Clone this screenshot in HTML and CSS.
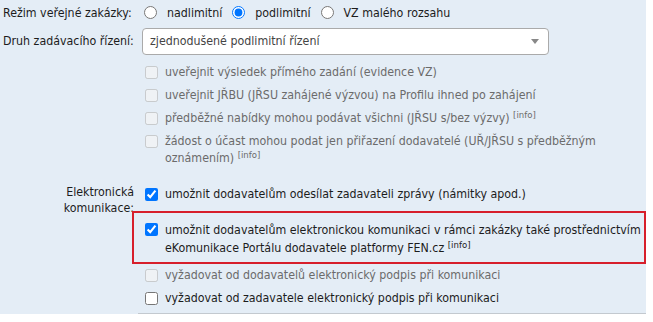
FILE: index.html
```html
<!DOCTYPE html>
<html lang="cs">
<head>
<meta charset="utf-8">
<link rel="stylesheet" href="styles.css">
</head>
<body>
<div class="form">
  <div class="row row-radio">
    <div class="label">Režim veřejné zakázky:</div>
    <div class="field radios">
      <label class="radio"><input type="radio" name="rezim"> nadlimitní</label>
      <label class="radio"><input type="radio" name="rezim" checked> podlimitní</label>
      <label class="radio"><input type="radio" name="rezim"> VZ malého rozsahu</label>
    </div>
  </div>
  <div class="row row-select">
    <div class="label">Druh zadávacího řízení:</div>
    <div class="field">
      <div class="select"><span>zjednodušené podlimitní řízení</span><span class="arrow"></span></div>
    </div>
  </div>
  <div class="row">
    <div class="label"></div>
    <div class="field checks">
      <label class="check disabled"><input type="checkbox" disabled><span>uveřejnit výsledek přímého zadání (evidence VZ)</span></label>
      <label class="check disabled"><input type="checkbox" disabled><span>uveřejnit JŘBU (JŘSU zahájené výzvou) na Profilu ihned po zahájení</span></label>
      <label class="check disabled"><input type="checkbox" disabled><span>předběžné nabídky mohou podávat všichni (JŘSU s/bez výzvy) <sup>[info]</sup></span></label>
      <label class="check disabled"><input type="checkbox" disabled><span>žádost o účast mohou podat jen přiřazení dodavatelé (UŘ/JŘSU s předběžným oznámením) <sup>[info]</sup></span></label>
    </div>
  </div>
  <div class="row row-ek">
    <div class="label label-right">Elektronická<br>komunikace:</div>
    <div class="field checks last">
      <label class="check"><input type="checkbox" checked><span>umožnit dodavatelům odesílat zadavateli zprávy (námitky apod.)</span></label>
      <div class="highlight">
        <label class="check wide"><input type="checkbox" checked><span>umožnit dodavatelům elektronickou komunikaci v rámci zakázky také prostřednictvím eKomunikace Portálu dodavatele platformy FEN.cz <sup>[info]</sup></span></label>
      </div>
      <label class="check disabled"><input type="checkbox" disabled><span>vyžadovat od dodavatelů elektronický podpis při komunikaci</span></label>
      <label class="check"><input type="checkbox"><span>vyžadovat od zadavatele elektronický podpis při komunikaci</span></label>
    </div>
  </div>
</div>
</body>
</html>
```

FILE: styles.css
```css
html, body {
  margin: 0;
  padding: 0;
  background: #ffffff;
}
body {
  font-family: "DejaVu Sans Condensed", "DejaVu Sans", sans-serif;
  font-size: 12.3px;
  color: #1c1c1c;
}
.form {
  width: 646px;
  background: #e4edf6;
}
.row {
  display: flex;
  align-items: flex-start;
}
.label {
  width: 138px;
  box-sizing: border-box;
  padding-left: 3px;
  flex: none;
  white-space: nowrap;
}
.label-right {
  text-align: right;
  padding-right: 4px;
  padding-left: 0;
}
.field {
  flex: 1;
  min-width: 0;
}
.row-radio {
  height: 25px;
  align-items: center;
}
.radios {
  display: flex;
  align-items: center;
}
.radio {
  display: inline-flex;
  align-items: center;
  margin-right: 4px;
}
.radio input {
  margin: 0 10px 0 6px;
  width: 13px;
  height: 13px;
}
.row-select {
  align-items: center;
  height: 32px;
}
.select {
  width: 407px;
  height: 27px;
  box-sizing: border-box;
  background: #fff;
  border: 1px solid #aaaaaa;
  border-radius: 4px;
  margin-left: 4px;
  display: flex;
  align-items: center;
  justify-content: space-between;
  padding: 0 9px 0 7px;
  color: #444;
}
.arrow {
  width: 0;
  height: 0;
  border-left: 4px solid transparent;
  border-right: 4px solid transparent;
  border-top: 5px solid #888;
}
.checks {
  display: flex;
  flex-direction: column;
  padding-top: 4px;
}
.check {
  display: flex;
  align-items: flex-start;
  line-height: 17px;
  padding: 3px 0;
}
.check input {
  flex: none;
  margin: 2px 7px 0 7px;
  width: 13px;
  height: 13px;
}
.check.wide { line-height: 18px; }
.check.disabled { color: #6b6b6b; }
sup {
  font-size: 9.5px;
  line-height: 0;
  vertical-align: 4px;
}
.row-ek { padding-top: 9px; }
.row-ek .label { padding-top: 5px; line-height: 16px; }
.highlight {
  margin: 5px 0 0 -6px;
  border: 2px solid #d71f2b;
  padding: 5px 0 2px 4px;
}
.last {
  border-bottom: 1px solid #c3c9cf;
  padding-bottom: 3px;
}
```
